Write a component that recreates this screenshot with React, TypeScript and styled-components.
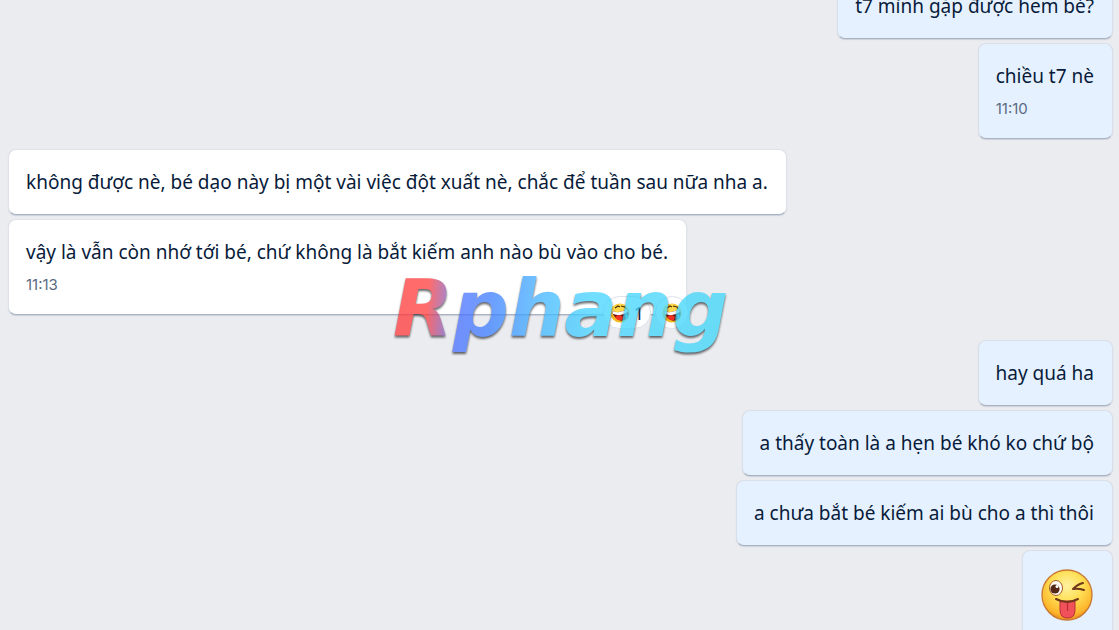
import React from 'react';
import styled, { createGlobalStyle } from 'styled-components';

const Global = createGlobalStyle`
  * { box-sizing: border-box; }
  body { margin: 0; background: #ebecf0; }
`;

const Page = styled.main`
  position: relative;
  height: 100vh;
  overflow: hidden;
  background: #ebecf0;
  color: #081b3a;
  font-family: 'Noto Sans', sans-serif;
  font-size: 19px;
  line-height: 28px;
`;

const Thread = styled.div`
  display: flex;
  flex-direction: column;
  gap: 10px;
  margin-top: -27px;
  padding: 0 6px 0 8px;
`;

const Group = styled.section<{ $mine?: boolean; $last?: boolean }>`
  display: flex;
  flex-direction: column;
  align-items: ${(p) => (p.$mine ? 'flex-end' : 'flex-start')};
  gap: 4px;
  padding-bottom: ${(p) => (p.$last ? '15px' : '0')};
`;

const Bubble = styled.article<{ $mine?: boolean }>`
  position: relative;
  padding: 18px 18px 18px 17px;
  border: 1px solid ${(p) => (p.$mine ? '#d9dfe9' : '#dfe2e9')};
  border-bottom-color: #a9b2c3;
  border-radius: 8px;
  background: ${(p) => (p.$mine ? '#e5f1ff' : '#ffffff')};
  box-shadow: 0 1px 1px #ccd1da;
`;

const Text = styled.p`
  margin: 0;
`;

const Time = styled.time`
  display: block;
  margin-top: 8px;
  color: #5a6981;
  font-family: Inter, sans-serif;
  font-size: 15px;
  line-height: 22px;
`;

const Reactions = styled.div`
  position: absolute;
  right: -3px;
  bottom: -15px;
  display: flex;
  gap: 4px;
`;

const Reaction = styled.button`
  display: flex;
  align-items: center;
  gap: 4px;
  height: 33px;
  padding: 0 6px;
  border: 1px solid #dde1e8;
  border-radius: 17px;
  background: #ffffff;
  color: #081b3a;
  font-family: 'Noto Sans', sans-serif;
  font-size: 18px;
`;

const Watermark = styled.div`
  position: absolute;
  inset: 0;
  display: flex;
  align-items: center;
  justify-content: center;
  pointer-events: none;
`;

const WatermarkArt = styled.svg`
  display: block;
  opacity: 0.75;
  filter: drop-shadow(0 2px 1px #303236);
`;

const Winking = styled.svg`
  display: block;
`;

const LaughIcon = () => (
  <svg width="20" height="22" viewBox="0 0 20 22" aria-hidden="true">
    <circle cx="10" cy="11" r="9.5" fill="#f4b71e" />
    <path d="M1 9a9.500 9.500 0 0 1 18-1l-5 1-8 3-5 1z" fill="#ffd84a" />
    <path d="M5 6l3-2 2 1M11 4l4 1 1 2" stroke="#4a2c05" strokeWidth="1.200" fill="none" />
    <path d="M2 9q8 3 15-2 3 5 0 9-4 4-8 2-6-3-7-9z" fill="#6a0f0c" />
    <path d="M2 9q8 3 15-2l1 3q-7 5-15 2z" fill="#ffffff" />
    <path d="M5 15q4-4 8 0l-1 3q-5 1-7-3z" fill="#f03020" />
    <path d="M16 11q3 2 1 6-3 0-1-6z" fill="#48bdd8" />
  </svg>
);

const WinkIcon = () => (
  <Winking width="54" height="54" viewBox="-1 0 54 54" role="img" aria-label="Winking face with tongue">
    <defs>
      <radialGradient id="face" cx="50%" cy="32%" r="68%">
        <stop offset="0" stopColor="#fff2a0" />
        <stop offset="0.45" stopColor="#ffdf55" />
        <stop offset="0.85" stopColor="#fcb52b" />
        <stop offset="1" stopColor="#e98c1c" />
      </radialGradient>
    </defs>
    <circle cx="26" cy="26" r="25" fill="url(#face)" stroke="#c87832" strokeWidth="1.300" />
    <ellipse cx="15" cy="19" rx="6.500" ry="7.500" fill="#fffdf2" stroke="#a85a20" strokeWidth="1" />
    <circle cx="14" cy="20" r="4.600" fill="#542616" />
    <circle cx="16" cy="17.500" r="1.500" fill="#ffffff" />
    <path d="M42 14q-5 1-10 6 5-1 11 1" fill="none" stroke="#71351b" strokeWidth="2" strokeLinecap="round" strokeLinejoin="round" />
    <path d="M19 32h15v9q0 8-7.500 8T19 41z" fill="#f1525a" stroke="#b92d37" strokeWidth="1" />
    <path d="M26.500 34v8" stroke="#b92d37" strokeWidth="1.200" />
    <path d="M15 30q11 6 22 0" fill="none" stroke="#71351b" strokeWidth="2" strokeLinecap="round" />
  </Winking>
);

export default function App() {
  return (
    <Page>
      <Global />
      <Thread>
        <Group $mine>
          <Bubble $mine><Text>t7 mình gặp được hem bé?</Text></Bubble>
          <Bubble $mine>
            <Text>chiều t7 nè</Text>
            <Time>11:10</Time>
          </Bubble>
        </Group>
        <Group $last>
          <Bubble><Text>không được nè, bé dạo này bị một vài việc đột xuất nè, chắc để tuần sau nữa nha a.</Text></Bubble>
          <Bubble>
            <Text>vậy là vẫn còn nhớ tới bé, chứ không là bắt kiếm anh nào bù vào cho bé.</Text>
            <Time>11:13</Time>
            <Reactions>
              <Reaction aria-label="1 laughing reaction"><LaughIcon />1</Reaction>
              <Reaction aria-label="Add laughing reaction"><LaughIcon /></Reaction>
            </Reactions>
          </Bubble>
        </Group>
        <Group $mine>
          <Bubble $mine><Text>hay quá ha</Text></Bubble>
          <Bubble $mine><Text>a thấy toàn là a hẹn bé khó ko chứ bộ</Text></Bubble>
          <Bubble $mine><Text>a chưa bắt bé kiếm ai bù cho a thì thôi</Text></Bubble>
          <Bubble $mine><WinkIcon /></Bubble>
        </Group>
      </Thread>
      <Watermark>
        <WatermarkArt width="340" height="110" viewBox="0 0 340 110">
          <defs>
            <linearGradient id="brand" gradientUnits="userSpaceOnUse" x1="0" y1="0" x2="340" y2="30">
              <stop offset="0" stopColor="#ff3939" />
              <stop offset="0.12" stopColor="#ff3b3b" />
              <stop offset="0.21" stopColor="#4a70ff" />
              <stop offset="0.3" stopColor="#3c7cff" />
              <stop offset="0.45" stopColor="#3fb4ff" />
              <stop offset="0.6" stopColor="#43d4ff" />
              <stop offset="1" stopColor="#3cd6f8" />
            </linearGradient>
          </defs>
          <text x="3" y="76" fill="url(#brand)" fontFamily="'DejaVu Sans', sans-serif" fontSize="78" fontWeight="700" fontStyle="italic">Rphang</text>
        </WatermarkArt>
      </Watermark>
    </Page>
  );
}
